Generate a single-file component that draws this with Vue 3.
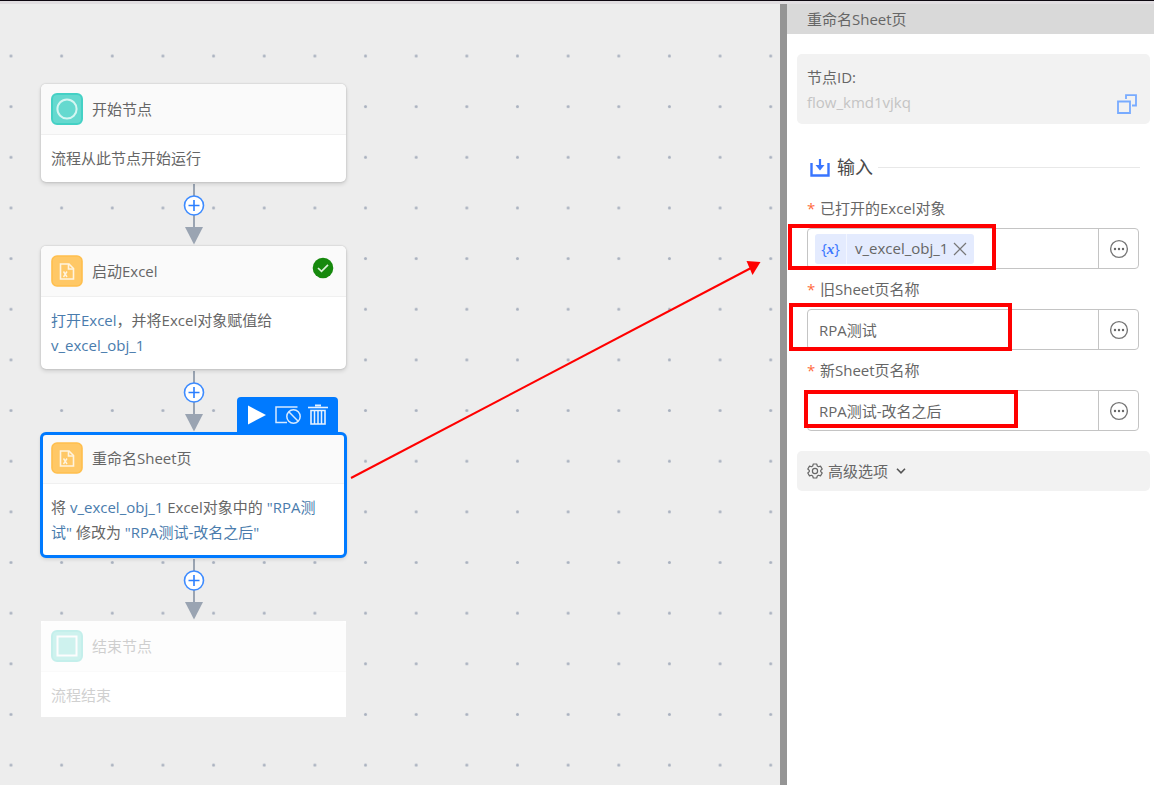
<template>
  <div class="designer">
    <main class="canvas">
      <svg class="canvas-dots" aria-hidden="true">
        <defs>
          <pattern id="dots" x="-14.3" y="-24" width="50.65" height="50.65" patternUnits="userSpaceOnUse">
            <circle cx="25.3" cy="25.3" r="1.5" fill="#a9b1bf" />
          </pattern>
        </defs>
        <rect y="10" width="100%" height="100%" fill="url(#dots)" />
      </svg>

      <div class="flow">
        <template v-for="(node, index) in nodes" :key="node.title">
          <div v-if="index > 0" class="connector">
            <svg width="24" height="64" viewBox="0 0 24 64">
              <path d="M12 2V46" stroke="#9aa4b2" stroke-width="2" />
              <path d="M3 45H21L12 62.5Z" fill="#9aa4b2" />
              <circle cx="12" cy="23.5" r="9.5" fill="#fff" stroke="#3d8bff" stroke-width="1.6" />
              <path d="M6.5 23.5H17.5M12 18V29" stroke="#2b7fff" stroke-width="1.6" />
            </svg>
          </div>

          <section class="node" :class="{ selected: node.selected, disabled: node.disabled }">
            <div v-if="node.selected" class="node-toolbar">
              <button type="button" aria-label="运行">
                <svg width="20" height="22" viewBox="0 0 20 22">
                  <path d="M1 1.5L19 11L1 20.5Z" fill="#fff" />
                </svg>
              </button>
              <button type="button" aria-label="禁用">
                <svg width="26" height="20" viewBox="0 0 26 20" fill="none" stroke="#d6e9ff" stroke-width="1.5">
                  <path d="M22.5 2H1V17.5H12" />
                  <circle cx="18.5" cy="11.5" r="6.7" />
                  <path d="M13.8 6.8L23.2 16.2" />
                </svg>
              </button>
              <button type="button" aria-label="删除">
                <svg width="20" height="22" viewBox="0 0 20 22" fill="none" stroke="#e6f2ff">
                  <path d="M0 3.5H20" stroke-width="1.6" />
                  <path d="M7 1.5H13" stroke-width="2" />
                  <path d="M3 6.5H17V20H3Z" stroke-width="1.6" />
                  <path d="M6.5 7V20M10 7V20M13.5 7V20" stroke-width="1.5" />
                </svg>
              </button>
            </div>

            <header class="node-header">
              <svg v-if="node.type === 'start'" width="32" height="32" viewBox="0 0 32 32">
                <rect x="1" y="1" width="30" height="30" rx="5" fill="#65d9cf" stroke="#44d1c5" stroke-width="2" />
                <circle cx="16" cy="16" r="9.6" fill="none" stroke="#d5f6f2" stroke-width="2" />
              </svg>
              <svg v-else-if="node.type === 'end'" width="32" height="32" viewBox="0 0 32 32">
                <rect x="1" y="1" width="30" height="30" rx="5" fill="#65d9cf" stroke="#44d1c5" stroke-width="2" />
                <rect x="6.5" y="6.5" width="19" height="19" fill="none" stroke="#fff" stroke-width="2" />
              </svg>
              <svg v-else width="32" height="32" viewBox="0 0 32 32">
                <rect x="1" y="1" width="30" height="30" rx="5" fill="#ffc866" stroke="#ffbf4d" stroke-width="1.6" />
                <g fill="none" stroke="#fff4df" stroke-width="1.6">
                  <path d="M9.5 9H18L22.5 13.5V24H9.5Z" />
                  <path d="M17.5 9V14H22.5" />
                  <path d="M12.5 16.500L16 22M16 16.500L12.5 22" stroke-width="1.4" />
                </g>
              </svg>
              <h3>{{ node.title }}</h3>
              <svg v-if="node.done" class="node-status" width="22" height="22" viewBox="0 0 22 22">
                <circle cx="11" cy="11" r="10.3" fill="#16890d" />
                <path d="M6 11L9.5 14.3L16 7.8" fill="none" stroke="#d9f0d7" stroke-width="1.7" />
              </svg>
            </header>
            <p class="node-body">
              <span v-for="(part, i) in node.text" :key="i" :class="{ variable: part.variable }">{{ part.value }}</span>
            </p>
          </section>
        </template>
      </div>

      <svg class="callout-arrow" width="414" height="222" viewBox="0 0 414 222" aria-hidden="true">
        <path d="M2 219L402 9" stroke="#f00" stroke-width="2" />
        <path d="M397.5 2L411.5 3L403.5 16Z" fill="#f00" />
      </svg>
    </main>

    <div class="splitter"></div>

    <aside class="panel">
      <h2 class="panel-title">重命名Sheet页</h2>

      <div class="panel-content">
        <div class="card node-id">
          <div>
            <div>节点ID:</div>
            <div class="id-value">flow_kmd1vjkq</div>
          </div>
          <button type="button" aria-label="复制">
            <svg width="20" height="20" viewBox="0 0 20 20" fill="none" stroke="#78abff" stroke-width="1.8">
              <path d="M1 7.5H13V19H1Z" />
              <path d="M9 5V1.2H19V11.5H15" />
            </svg>
          </button>
        </div>

        <div class="section-title">
          <svg width="20" height="18" viewBox="0 0 20 18" fill="none">
            <path d="M1.5 4V16.5H18.5V4" stroke="#3975ff" stroke-width="2.4" />
            <path d="M10 0V8" stroke="#3975ff" stroke-width="2.2" />
            <path d="M5.5 6H14.5L10 11.5Z" fill="#3975ff" />
          </svg>
          <h4>输入</h4>
        </div>

        <div v-for="field in fields" :key="field.id" class="field">
          <label :for="field.id"><i>*</i>{{ field.label }}</label>
          <div class="input-group">
            <span v-if="field.tag" class="tag">
              <span class="tag-icon">{<b>x</b>}</span>
              <span class="tag-text">{{ field.tag }}</span>
              <button type="button" aria-label="移除" @click="field.tag = ''">
                <svg width="14" height="14" viewBox="0 0 14 14" stroke="#777" stroke-width="1.2">
                  <path d="M1 1L13 13M13 1L1 13" />
                </svg>
              </button>
            </span>
            <input :id="field.id" v-model="field.value" type="text" />
            <button type="button" class="btn-more" aria-label="更多">
              <svg width="20" height="20" viewBox="0 0 20 20">
                <circle cx="10" cy="10" r="8.4" fill="none" stroke="#777" stroke-width="1.4" />
                <g fill="#666">
                  <circle cx="6" cy="10" r="1.2" />
                  <circle cx="10" cy="10" r="1.2" />
                  <circle cx="14" cy="10" r="1.2" />
                </g>
              </svg>
            </button>
          </div>
          <div class="highlight" :class="'highlight-' + field.id"></div>
        </div>

        <button type="button" class="card btn-advanced">
          <svg width="16" height="16" viewBox="0 0 16 16" fill="none" stroke="#666" stroke-width="1.2" stroke-linejoin="round">
            <path d="M6.3 1H9.7L10.3 3L11.5 3.7L13.5 3.1L15.2 6L13.7 7.4V8.6L15.2 10L13.5 12.9L11.5 12.3L10.3 13L9.7 15H6.3L5.7 13L4.5 12.3L2.5 12.9L0.8 10L2.3 8.6V7.4L0.8 6L2.5 3.1L4.5 3.7L5.7 3Z" />
            <circle cx="8" cy="8" r="2.6" />
          </svg>
          <span>高级选项</span>
          <svg width="10" height="8" viewBox="0 0 10 8" fill="none" stroke="#555" stroke-width="1.6">
            <path d="M1 1.8L5 5.8L9 1.8" />
          </svg>
        </button>
      </div>
    </aside>
  </div>
</template>

<script setup>
import { ref } from "vue";

const nodes = ref([
  {
    type: "start",
    title: "开始节点",
    text: [{ value: "流程从此节点开始运行" }],
  },
  {
    type: "excel",
    title: "启动Excel",
    done: true,
    text: [
      { value: "打开Excel", variable: true },
      { value: "，并将Excel对象赋值给 " },
      { value: "v_excel_obj_1", variable: true },
    ],
  },
  {
    type: "excel",
    title: "重命名Sheet页",
    selected: true,
    text: [
      { value: "将 " },
      { value: "v_excel_obj_1", variable: true },
      { value: " Excel对象中的 " },
      { value: '"RPA测试"', variable: true },
      { value: " 修改为 " },
      { value: '"RPA测试-改名之后"', variable: true },
    ],
  },
  {
    type: "end",
    title: "结束节点",
    disabled: true,
    text: [{ value: "流程结束" }],
  },
]);

const fields = ref([
  { id: "excel", label: "已打开的Excel对象", tag: "v_excel_obj_1", value: "" },
  { id: "old-name", label: "旧Sheet页名称", value: "RPA测试" },
  { id: "new-name", label: "新Sheet页名称", value: "RPA测试-改名之后" },
]);
</script>

<style>
body {
  margin: 0;
}
</style>

<style scoped>
.designer {
  display: flex;
  min-height: 100vh;
  box-sizing: border-box;
  border-top: 1px solid #0d0810;
  box-shadow: inset 0 3px 0 #e1dee1;
  font-family: "Open Sans", "Noto Sans CJK SC", sans-serif;
  font-size: 15px;
  line-height: 25px;
  color: #666;
}

h2,
h3,
h4,
p {
  margin: 0;
  font-size: inherit;
  font-weight: 400;
}

button {
  display: flex;
  align-items: center;
  justify-content: center;
  padding: 0;
  border: none;
  background: none;
  font: inherit;
  color: inherit;
  cursor: pointer;
}

svg {
  flex-shrink: 0;
}

.canvas {
  position: relative;
  flex: 1;
  min-width: 0;
  margin-top: 3px;
  padding: 80px 40px 40px 41px;
  box-sizing: border-box;
  background: #ededed;
}

.canvas-dots {
  position: absolute;
  top: 0;
  left: 0;
  width: 100%;
  height: 100%;
}

.flow {
  position: relative;
  width: 305px;
}

.connector {
  display: flex;
  justify-content: center;
  height: 64px;
}

.node {
  position: relative;
  background: #fff;
  border-radius: 5px;
  box-shadow: 0 0 2px rgba(0, 0, 0, 0.2), 0 2px 4px rgba(0, 0, 0, 0.14);
}

.node.selected {
  padding-bottom: 1px;
  outline: 3px solid #007aff;
  outline-offset: -2px;
}

.node.disabled {
  border-radius: 0;
  box-shadow: none;
}

.node.disabled > * > * {
  opacity: 0.3;
}

.node-toolbar {
  position: absolute;
  right: 8px;
  bottom: 100%;
  display: flex;
  align-items: center;
  justify-content: space-between;
  width: 101px;
  height: 36px;
  padding: 0 10px;
  box-sizing: border-box;
  background: #007aff;
  border-radius: 4px 4px 0 0;
}

.node-header {
  display: flex;
  align-items: center;
  gap: 9px;
  height: 50px;
  padding: 0 12px 0 10px;
  background: #fafafa;
  border-bottom: 1px solid #f0f0f0;
  border-radius: 5px 5px 0 0;
}

.node.disabled .node-header {
  background: #fdfdfd;
  border-bottom-color: #fafafa;
}

.node-header h3 {
  flex: 1;
}

.node-status {
  margin-bottom: 6px;
}

.node-body {
  padding: 11px 16px 11px 10px;
}

.node.disabled .node-body {
  padding-bottom: 9px;
}

.variable {
  color: #4a7cad;
}

.callout-arrow {
  position: absolute;
  top: 255px;
  left: 349px;
}

.splitter {
  width: 7px;
  margin-top: 3px;
  background: #959595;
}

.panel {
  width: 32%;
  max-width: 367px;
  flex-shrink: 0;
  margin-top: 3px;
  background: #fff;
}

.panel-title {
  height: 30px;
  padding-left: 20px;
  line-height: 30px;
  background: #d9d9d9;
}

.panel-content {
  padding: 20px 4px 20px 10px;
}

.card {
  padding: 0 13px 0 10px;
  background: #f2f2f2;
  border-radius: 5px;
}

.node-id {
  display: flex;
  align-items: flex-end;
  justify-content: space-between;
  padding-top: 11px;
  padding-bottom: 9px;
}

.node-id button {
  height: 22px;
}

.id-value {
  color: #c4c4c4;
}

.section-title {
  display: flex;
  align-items: center;
  margin: 31px 10px 16px 13px;
}

.section-title h4 {
  padding: 0 5px 0 7px;
  font-size: 18px;
  color: #4a4a4a;
}

.section-title::after {
  content: "";
  flex: 1;
  height: 1px;
  background: #e8e8e8;
}

.field {
  position: relative;
  margin: 0 11px 8px 10px;
}

.field label {
  display: block;
  height: 32px;
}

.field label i {
  display: inline-block;
  width: 13px;
  font-style: normal;
  color: #ff6b3d;
}

.input-group {
  display: flex;
  align-items: center;
  height: 41px;
  box-sizing: border-box;
  border: 1px solid #c4c4c4;
  border-radius: 4px;
  overflow: hidden;
}

.input-group input {
  flex: 1;
  min-width: 0;
  height: 100%;
  padding: 0 11px;
  box-sizing: border-box;
  border: none;
  outline: none;
  background: none;
  font: inherit;
  color: inherit;
}

.btn-more {
  width: 40px;
  height: 100%;
  border-left: 1px solid #c4c4c4;
}

.tag {
  display: flex;
  align-items: center;
  height: 30px;
  margin-left: 7px;
  padding-right: 7px;
  background: #e4ebfe;
  border-radius: 3px;
}

.tag-icon {
  width: 31px;
  height: 30px;
  line-height: 28px;
  text-align: center;
  color: #3975ff;
  border-right: 1px solid #f3f6ff;
}

.tag-icon b {
  font-family: "Liberation Serif", serif;
  font-style: italic;
}

.tag-text {
  padding: 0 5px 0 8px;
}

.highlight {
  position: absolute;
  box-sizing: border-box;
  border: 4px solid #f00;
  pointer-events: none;
}

.highlight-excel {
  top: 28px;
  left: -19px;
  width: 208px;
  height: 46px;
}

.highlight-old-name {
  top: 26px;
  left: -18px;
  width: 223px;
  height: 48px;
}

.highlight-new-name {
  top: 32px;
  left: -3px;
  width: 214px;
  height: 38px;
}

.btn-advanced {
  justify-content: flex-start;
  gap: 5px;
  width: 100%;
  height: 40px;
  margin-top: 20px;
}

.btn-advanced span {
  margin-right: 3px;
}
</style>
